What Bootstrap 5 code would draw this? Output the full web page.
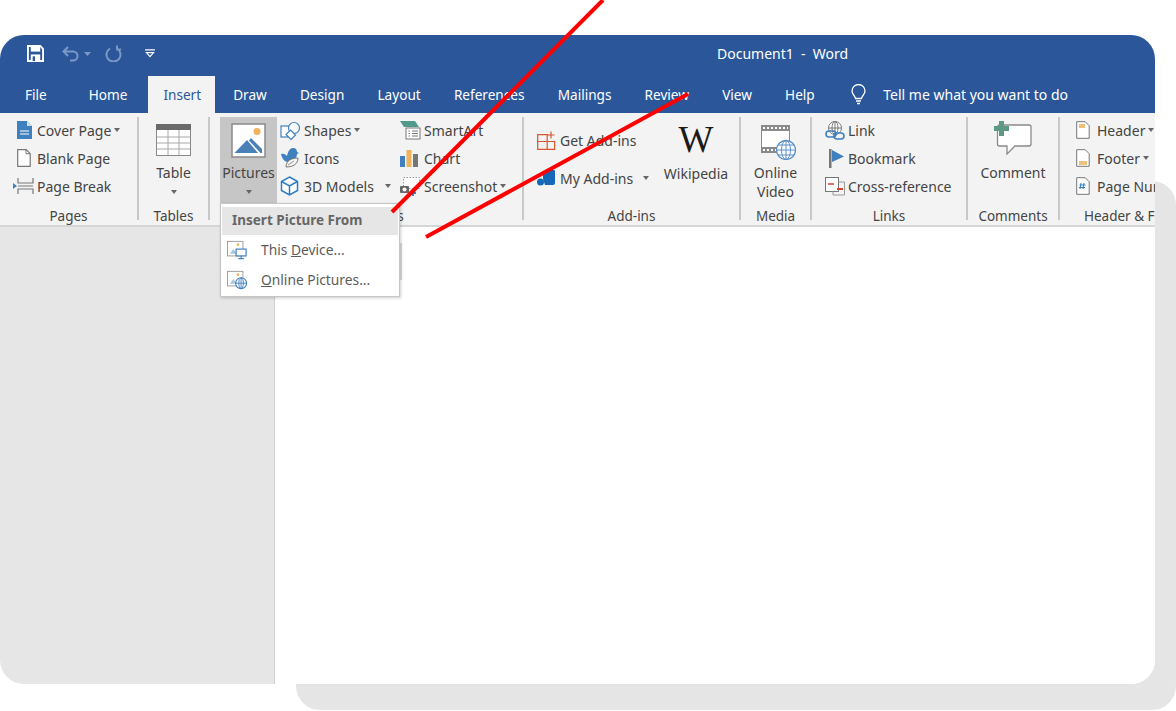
<!DOCTYPE html>
<html lang="en">
<head>
<meta charset="utf-8">
<title>Word - Insert Picture</title>
<link rel="stylesheet" href="https://cdn.jsdelivr.net/npm/bootstrap@5.3.0/dist/css/bootstrap.min.css">
<style>
html,body{height:100%;overflow:hidden;background:#fff}
body{font-family:"Noto Sans","Open Sans",sans-serif;font-size:14px;color:#444}
.stage{position:relative;width:1176px;height:711px;padding-top:35px;overflow:hidden}
.back-panel{position:absolute;left:296px;top:181px;right:0;bottom:1px;background:#e5e5e5;border-radius:24px}
.app-win{position:relative;width:1155px;height:649px;border-radius:24px;overflow:hidden;background:#fff}
.title-bar{height:41px;background:#2b579a;color:#fff;padding-left:27px;padding-bottom:4px}
.qat-box{width:690px}
.qat-gap{margin-left:18px}
.redo-gap{margin-left:14px}
.qat-last{margin-left:23px}
.tab-bar{height:37px;background:#2b579a}
.tab-bar .nav-link{color:#fff;padding:0 16.6px;height:37px;line-height:37px;font-size:13.6px}
.tab-bar .tab-file{padding:0 25px}
.tab-bar .tab-home{padding:0 21px 0 17px}
.tab-bar .active-tab{background:#f3f3f3;color:#2b579a;padding:0 14px 0 15px}
.tab-bar .tab-draw{padding-left:18px}
.tell-box{color:#fff;margin-left:20px;gap:17px;font-size:14px}
.ribbon-bar{height:114px;background:#f3f3f3;border-bottom:2px solid #d6d6d6;overflow:hidden}
.rb-group{flex:none;height:103px;margin-top:4px;border-right:2px solid #c8c8c8;position:relative}
.rb-group:last-child{border-right:0}
.rb-body{height:90px;margin-top:-1px}
.rb-label{height:20px;line-height:20px;font-size:13.500px;text-align:center;white-space:nowrap;color:#444}
.g-pages{width:139px;padding-left:13px}
.g-tables{width:71px}
.g-illus{width:314px;padding-left:10px}
.g-addins{width:217px;padding-left:13px}
.g-media{width:71px}
.g-links{width:156px;padding-left:13px}
.g-comments{width:92px}
.g-header{width:110px;padding-left:16px}
.pull-13{margin-left:-13px}
.pull-10{margin-left:-10px}
.label-hf{margin-left:-16px;padding-left:24px;text-align:left}
.rb-row{height:28px;white-space:nowrap}
.ico-20{width:24px;flex:none;display:flex;align-items:center}
.ico-23{width:23px}
.ico-21{width:21px}
.cap-dn{display:inline-block;width:0;height:0;border-left:3.5px solid transparent;border-right:3.5px solid transparent;border-top:4px solid #666;margin-left:3px}
.cap-far{margin-left:11px}
.cap-mid{margin-left:10px}
.big-btn{display:flex;flex-direction:column;align-items:center;text-align:center;line-height:19px;white-space:nowrap}
.pics-btn{width:57px;height:86px;background:#c6c6c6;padding-top:6px;margin-right:3px;margin-top:1px}
.lbl-table{margin-top:7px}
.lbl-pics{margin-top:5px}
.lbl-comment{margin-top:8px}
.lbl-online{margin-top:3px}
.table-ico{margin-top:8px}
.video-ico{margin-top:9px;margin-left:5px}
.comment-ico{margin-top:4px}
.col-shapes{width:120px}
.col-getadd{width:129px}
.row-getadd{height:48px}
.col-wiki{margin-left:-4px;width:68px}
.wiki-w{font-family:"Liberation Serif",serif;font-size:37px;line-height:40px;color:#1a1a1a;height:44px;margin-top:4px}
.pics-menu.show{position:absolute;left:220px;top:168px;width:180px;height:94px;padding:3px 1px;margin:0;border:1px solid #c6c6c6;border-radius:0;background:#fff;box-shadow:1px 1px 3px rgba(0,0,0,.2);z-index:3}
.pics-menu .dropdown-header{background:#e6e6e6;color:#666;font-weight:700;font-size:13.5px;padding:0 10px;height:28px;line-height:27px}
.pics-menu .dropdown-item{color:#5c5c5c;padding:0 5px;height:30px;display:flex;align-items:center;gap:14px;font-size:13.800px}
.menu-stub{position:absolute;left:400px;top:208px;width:2px;height:37px;background:#ddd;z-index:2}
.doc-area{height:457px}
.left-pane{width:275px;background:#e6e6e6;border-right:1px solid #cfcfcf}
.red-marks{position:absolute;left:0;top:0;z-index:5;pointer-events:none}
</style>
</head>
<body>
<div class="stage">
  <div class="back-panel"></div>
  <div class="app-win">
    <div class="title-bar d-flex align-items-center">
      <div class="qat-box d-flex align-items-center">
        <svg width="17" height="17" viewBox="0 0 18 18"><path d="M1 1h13l3 3v13H1z" fill="none" stroke="#fff" stroke-width="2"/><rect x="4" y="1" width="10" height="6" fill="#fff"/><rect x="4" y="10" width="10" height="7" fill="#fff"/><rect x="6" y="12" width="2.5" height="5" fill="#2b579a"/></svg>
        <svg class="qat-gap" width="18" height="16" viewBox="0 0 18 16"><path d="M6 1L1.500 5.500 6 10M2 5.500h9a4.500 4.500 0 0 1 0 9H8" fill="none" stroke="#7c98c6" stroke-width="2"/></svg>
        <svg class="ms-1" width="7" height="4" viewBox="0 0 7 4"><path d="M0 0h7L3.500 4z" fill="#7c98c6"/></svg>
        <svg class="redo-gap" width="17" height="17" viewBox="0 0 17 17"><path d="M5 3.500a7 7 0 1 0 7 0M12 .5v4h4" fill="none" stroke="#7c98c6" stroke-width="2"/></svg>
        <svg class="qat-last" width="10" height="9" viewBox="0 0 11 10"><path d="M0 1h11" stroke="#fff" stroke-width="1.200"/><path d="M1.500 4h8L5.500 8.500z" fill="none" stroke="#fff" stroke-width="1.200"/></svg>
      </div>
      <div class="text-nowrap">Document1&nbsp; -&nbsp; Word</div>
    </div>

    <ul class="nav tab-bar flex-nowrap align-items-center">
      <li class="nav-item"><a class="nav-link tab-file" href="#">File</a></li>
      <li class="nav-item"><a class="nav-link tab-home" href="#">Home</a></li>
      <li class="nav-item"><a class="nav-link active-tab" href="#">Insert</a></li>
      <li class="nav-item"><a class="nav-link tab-draw" href="#">Draw</a></li>
      <li class="nav-item"><a class="nav-link" href="#">Design</a></li>
      <li class="nav-item"><a class="nav-link" href="#">Layout</a></li>
      <li class="nav-item"><a class="nav-link" href="#">References</a></li>
      <li class="nav-item"><a class="nav-link" href="#">Mailings</a></li>
      <li class="nav-item"><a class="nav-link" href="#">Review</a></li>
      <li class="nav-item"><a class="nav-link" href="#">View</a></li>
      <li class="nav-item"><a class="nav-link" href="#">Help</a></li>
      <li class="d-flex align-items-center tell-box text-nowrap">
        <svg width="15" height="21" viewBox="0 0 15 21"><path d="M4.500 14.500C4 11.500 1 10.500 1 7a6.500 6.500 0 0 1 13 0c0 3.500-3 4.500-3.500 7.500zM5 17h5M6 19.500h3" fill="none" stroke="#fff" stroke-width="1.300"/></svg>
        <span>Tell me what you want to do</span>
      </li>
    </ul>

    <div class="ribbon-bar d-flex">
      <div class="rb-group g-pages">
        <div class="rb-body">
          <div class="rb-row d-flex align-items-center">
            <span class="ico-20"><svg class="ms-1" width="15" height="18" viewBox="0 0 15 18"><path d="M0 0h10l5 5v13H0z" fill="#3f80bf"/><path d="M10 0l5 5h-5z" fill="#cfe0f0"/><path d="M3 10h9M3 13h9" stroke="#fff" stroke-width="1.200"/></svg></span>Cover Page<i class="cap-dn"></i>
          </div>
          <div class="rb-row d-flex align-items-center">
            <span class="ico-20"><svg class="ms-1" width="14" height="18" viewBox="0 0 14 18"><path d="M.7.700h8.500l4 4v12.600H.7z" fill="#fff" stroke="#777" stroke-width="1.200"/><path d="M9 .7v4h4.200" fill="none" stroke="#777"/></svg></span>Blank Page
          </div>
          <div class="rb-row d-flex align-items-center">
            <span class="ico-20"><svg width="21" height="18" viewBox="0 0 21 18"><path d="M0 6l4 3-4 3z" fill="#3f80bf"/><path d="M5 1v5h15V1M5 17v-5h15v5M5 9h15" fill="none" stroke="#777" stroke-width="1.200"/></svg></span>Page Break
          </div>
        </div>
        <div class="rb-label pull-13">Pages</div>
      </div>

      <div class="rb-group g-tables">
        <div class="rb-body big-btn">
          <svg class="table-ico" width="35" height="32" viewBox="0 0 35 32"><rect x=".5" y=".5" width="34" height="31" fill="#fff" stroke="#8a8a8a"/><rect width="35" height="6" fill="#6a6a6a"/><path d="M12 6v25M23 6v25M1 13h33M1 19h33M1 25h33" stroke="#a8a8a8"/></svg>
          <span class="lbl-table">Table</span>
          <i class="cap-dn ms-0 mt-2"></i>
        </div>
        <div class="rb-label">Tables</div>
      </div>

      <div class="rb-group g-illus">
        <div class="rb-body d-flex">
          <div class="big-btn pics-btn">
            <svg width="35" height="35" viewBox="0 0 35 35"><rect x="1" y="1" width="33" height="33" fill="#fff" stroke="#8a8a8a" stroke-width="1.500"/><circle cx="26" cy="8.500" r="3.500" fill="#efb35c"/><path d="M3.500 30L16 17l11 13z" fill="#4a80b8"/><path d="M20 15l11 11v4h-1.500L18 17.500z" fill="#4a80b8"/></svg>
            <span class="lbl-pics">Pictures</span>
            <i class="cap-dn ms-0 mt-2"></i>
          </div>
          <div class="col-shapes">
            <div class="rb-row d-flex align-items-center">
              <span class="ico-20"><svg width="21" height="19" viewBox="0 0 21 19"><rect x="1" y="5" width="11" height="11" fill="#fff" stroke="#3f80bf" stroke-width="1.200"/><circle cx="14" cy="7" r="5.500" fill="#fff" stroke="#3f80bf" stroke-width="1.200"/><path d="M10.500 9l5 5-4.500 4.500-5-5z" fill="#fff" stroke="#3f80bf" stroke-width="1.200"/></svg></span>Shapes<i class="cap-dn"></i>
            </div>
            <div class="rb-row d-flex align-items-center">
              <span class="ico-20"><svg width="20" height="20" viewBox="0 0 20 20"><path d="M1 6c3-1 5 1 6 2 1-5 3-8 6-8s4 2 4 4l2 1-2 1c0 2-1 4-3 6l-6 2C4 14 2 10 1 6z" fill="#3f80bf"/><path d="M6 19c0-6 5-9 12-9 0 6-5 9-12 9z" fill="#f3f3f3" stroke="#777"/><path d="M8 17l6-4" stroke="#777" stroke-width=".8"/></svg></span>Icons
            </div>
            <div class="rb-row d-flex align-items-center">
              <span class="ico-20"><svg width="19" height="20" viewBox="0 0 19 20"><path d="M9.500 1l8 4.500v9l-8 4.500-8-4.500v-9zM1.500 5.500l8 4.500 8-4.500M9.500 10v9" fill="#fff" stroke="#2e7cc4" stroke-width="1.500"/></svg></span><span>3D Models</span><i class="cap-dn cap-far"></i>
            </div>
          </div>
          <div>
            <div class="rb-row d-flex align-items-center">
              <span class="ico-20"><svg width="21" height="19" viewBox="0 0 21 19"><path d="M0 0h15l4 6H4z" fill="#4f9a8a"/><rect x="6" y="7" width="14" height="11" fill="#fff" stroke="#777"/><path d="M12 10h6M12 12.500h6M12 15h6M8.500 10h1.500M8.500 12.500h1.500M8.500 15h1.500" stroke="#777"/></svg></span>SmartArt
            </div>
            <div class="rb-row d-flex align-items-center">
              <span class="ico-20"><svg width="18" height="17" viewBox="0 0 18 17"><rect y="6" width="5" height="11" fill="#3f80bf"/><rect x="6.500" width="5" height="17" fill="#efb35c"/><rect x="13" y="4" width="5" height="13" fill="#777"/></svg></span>Chart
            </div>
            <div class="rb-row d-flex align-items-center">
              <span class="ico-20"><svg width="20" height="19" viewBox="0 0 20 19"><rect x="3.500" y=".5" width="16" height="11" fill="#fff" stroke="#999" stroke-dasharray="1.500 1.500"/><rect x="0" y="9" width="9" height="7" rx="1" fill="#666"/><circle cx="4.500" cy="12.500" r="2" fill="#fff"/><path d="M13 13v6M10 16h6" stroke="#2e7cc4" stroke-width="1.800"/></svg></span>Screenshot<i class="cap-dn"></i>
            </div>
          </div>
        </div>
        <div class="rb-label pull-10">Illustrations</div>
      </div>

      <div class="rb-group g-addins">
        <div class="rb-body d-flex">
          <div class="col-getadd">
            <div class="rb-row row-getadd d-flex align-items-center">
              <span class="ico-20 ico-23"><svg width="19" height="19" viewBox="0 0 19 19"><path d="M.7 3.700h9.500v14.600H.7zM.7 10.500h17v7.800h-8M14 .5v7M10.500 4h7" fill="none" stroke="#d9552c" stroke-width="1.200"/></svg></span>Get Add-ins
            </div>
            <div class="rb-row d-flex align-items-center">
              <span class="ico-20 ico-23"><svg width="18" height="17" viewBox="0 0 18 17"><path d="M6 2l8-2h3a1 1 0 0 1 1 1v12a2 2 0 0 1-2 2H8l-2-6z" fill="#1568b8"/><circle cx="3.500" cy="12" r="3.500" fill="#1568b8"/></svg></span>My Add-ins<i class="cap-dn cap-mid"></i>
            </div>
          </div>
          <div class="big-btn col-wiki">
            <span class="wiki-w">W</span>
            <span>Wikipedia</span>
          </div>
        </div>
        <div class="rb-label pull-13">Add-ins</div>
      </div>

      <div class="rb-group g-media">
        <div class="rb-body big-btn">
          <svg class="video-ico" width="35" height="35" viewBox="0 0 35 35"><rect x=".5" y=".5" width="28" height="27" fill="#fff" stroke="#8a8a8a"/><rect width="29" height="6" fill="#8a8a8a"/><rect y="22" width="29" height="6" fill="#8a8a8a"/><path d="M2 3h25M2 25h25" stroke="#fff" stroke-width="2" stroke-dasharray="2 2"/><circle cx="25" cy="25" r="9.500" fill="#fff" stroke="#5a90c8" stroke-width="1.300"/><path d="M15.500 25h19M25 15.500v19M17 20h16M17 30h16" stroke="#5a90c8"/><ellipse cx="25" cy="25" rx="4.500" ry="9.500" fill="none" stroke="#5a90c8"/></svg>
          <span class="lbl-online">Online</span>
          <span>Video</span>
        </div>
        <div class="rb-label">Media</div>
      </div>

      <div class="rb-group g-links">
        <div class="rb-body">
          <div class="rb-row d-flex align-items-center">
            <span class="ico-20 ico-23"><svg width="20" height="19" viewBox="0 0 20 19"><circle cx="10" cy="7" r="6.500" fill="#fff" stroke="#777"/><path d="M3.500 7h13M10 .5v13" stroke="#777"/><ellipse cx="10" cy="7" rx="3" ry="6.500" fill="none" stroke="#777"/><rect x="1" y="10" width="10" height="6" rx="3" fill="none" stroke="#3f80bf" stroke-width="1.600"/><rect x="9" y="12" width="10" height="6" rx="3" fill="none" stroke="#3f80bf" stroke-width="1.600"/></svg></span>Link
          </div>
          <div class="rb-row d-flex align-items-center">
            <span class="ico-20 ico-23"><svg class="ms-1" width="15" height="19" viewBox="0 0 15 19"><rect width="2.500" height="19" fill="#777"/><path d="M3 1l12 6.500L3 13z" fill="#3f80bf"/></svg></span>Bookmark
          </div>
          <div class="rb-row d-flex align-items-center">
            <span class="ico-20 ico-23"><svg width="20" height="19" viewBox="0 0 20 19"><rect x=".5" y=".5" width="13" height="14" fill="#fff" stroke="#777"/><path d="M14 5h5.500v13H8v-3" fill="none" stroke="#999"/><path d="M3 7h6" stroke="#d9412c" stroke-width="1.500"/><path d="M12 12h6" stroke="#d9412c" stroke-width="2"/></svg></span>Cross-reference
          </div>
        </div>
        <div class="rb-label pull-13">Links</div>
      </div>

      <div class="rb-group g-comments">
        <div class="rb-body big-btn">
          <svg class="comment-ico" width="38" height="35" viewBox="0 0 38 35"><path d="M5.500 5H35a2 2 0 0 1 2 2v17a2 2 0 0 1-2 2H21l-8 8v-8H5.500a2 2 0 0 1-2-2V7a2 2 0 0 1 2-2z" fill="#fff" stroke="#8a8a8a" stroke-width="1.300"/><path d="M5 1h5v5h5v5h-5v5H5v-5H0V6h5z" fill="#5d9a86"/></svg>
          <span class="lbl-comment">Comment</span>
        </div>
        <div class="rb-label">Comments</div>
      </div>

      <div class="rb-group g-header">
        <div class="rb-body">
          <div class="rb-row d-flex align-items-center">
            <span class="ico-20 ico-21"><svg width="14" height="18" viewBox="0 0 14 18"><path d="M.7.700h8.500l4 4v12.600H.7z" fill="#fff" stroke="#777"/><rect x="3" y="3" width="6" height="4" fill="#efc27c"/></svg></span>Header<i class="cap-dn"></i>
          </div>
          <div class="rb-row d-flex align-items-center">
            <span class="ico-20 ico-21"><svg width="14" height="18" viewBox="0 0 14 18"><path d="M.7.700h8.500l4 4v12.600H.7z" fill="#fff" stroke="#777"/><rect x="3" y="12" width="8" height="4" fill="#efc27c"/></svg></span>Footer<i class="cap-dn"></i>
          </div>
          <div class="rb-row d-flex align-items-center">
            <span class="ico-20 ico-21"><svg width="14" height="18" viewBox="0 0 14 18"><path d="M.7.700h8.500l4 4v12.600H.7z" fill="#fff" stroke="#777"/><path d="M5 6l-1 6M8 6l-1 6M3.500 8h6M3 10.500h6" stroke="#2e7cc4"/></svg></span>Page Number
          </div>
        </div>
        <div class="rb-label label-hf">Header &amp; Footer</div>
      </div>
    </div>

    <div class="doc-area d-flex">
      <div class="left-pane"></div>
      <div class="flex-grow-1 bg-white"></div>
    </div>

    <div class="menu-stub"></div>
    <div class="dropdown-menu show pics-menu">
      <div class="dropdown-header">Insert Picture From</div>
      <a class="dropdown-item" href="#">
        <svg width="20" height="20" viewBox="0 0 22 20"><rect x=".5" y=".5" width="17" height="16" fill="#fff" stroke="#999"/><circle cx="12" cy="4" r="1.500" fill="#efb35c"/><path d="M3 14l4-5 4 5z" fill="#a8c6e2"/><rect x="10" y="9" width="11" height="7.500" fill="#fff" stroke="#3f80bf" stroke-width="1.300"/><path d="M15.500 17v2M12.500 19.500h6" stroke="#3f80bf" stroke-width="1.200"/></svg>
        <span>This <u>D</u>evice...</span>
      </a>
      <a class="dropdown-item" href="#">
        <svg width="20" height="20" viewBox="0 0 22 20"><rect x=".5" y=".5" width="17" height="16" fill="#fff" stroke="#999"/><circle cx="12" cy="4" r="1.500" fill="#efb35c"/><path d="M3 14l4-5 4 5z" fill="#a8c6e2"/><circle cx="15.500" cy="13.500" r="6" fill="#fff" stroke="#3f80bf" stroke-width="1.200"/><path d="M9.500 13.500h12M15.500 7.500v12" stroke="#3f80bf"/><ellipse cx="15.500" cy="13.500" rx="2.500" ry="6" fill="none" stroke="#3f80bf"/></svg>
        <span><u>O</u>nline Pictures...</span>
      </a>
    </div>
  </div>

  <svg class="red-marks" width="1176" height="711" viewBox="0 0 1176 711">
    <path d="M603 0L392 212M688 94L426 237" fill="none" stroke="#ff0000" stroke-width="4"/>
  </svg>
</div>
<script src="https://cdn.jsdelivr.net/npm/bootstrap@5.3.0/dist/js/bootstrap.bundle.min.js"></script>
</body>
</html>
